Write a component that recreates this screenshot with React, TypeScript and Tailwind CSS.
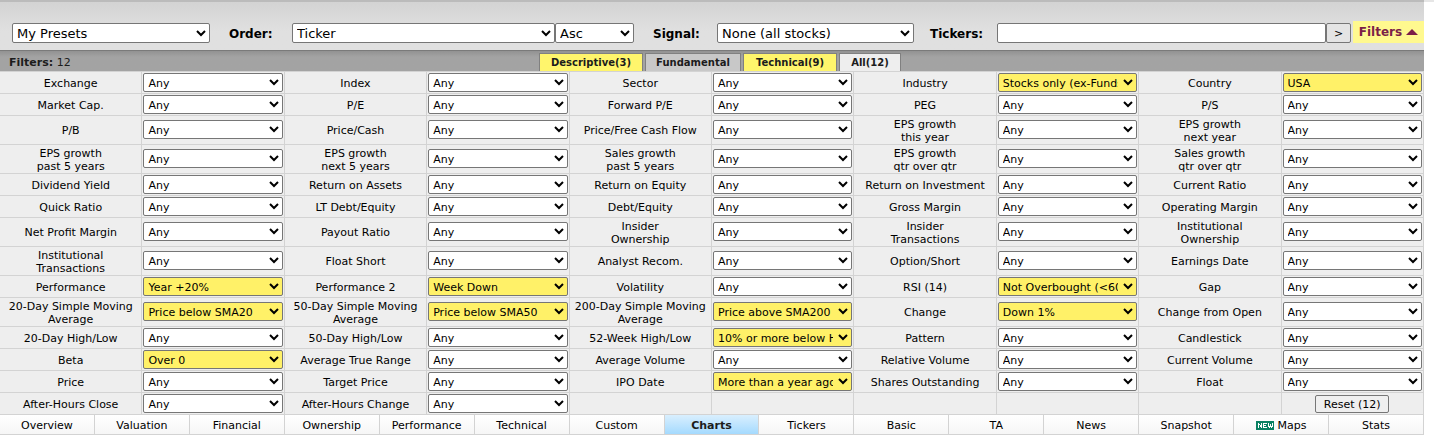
import React from "react";

type Filter = { label: string; lines?: [string, string]; value?: string };

const rows: (Filter | null)[][] = [
  [{ label: "Exchange" }, { label: "Index" }, { label: "Sector" }, { label: "Industry", value: "Stocks only (ex-Funds)" }, { label: "Country", value: "USA" }],
  [{ label: "Market Cap." }, { label: "P/E" }, { label: "Forward P/E" }, { label: "PEG" }, { label: "P/S" }],
  [{ label: "P/B" }, { label: "Price/Cash" }, { label: "Price/Free Cash Flow" }, { label: "EPS growth this year", lines: ["EPS growth", "this year"] }, { label: "EPS growth next year", lines: ["EPS growth", "next year"] }],
  [
    { label: "EPS growth past 5 years", lines: ["EPS growth", "past 5 years"] },
    { label: "EPS growth next 5 years", lines: ["EPS growth", "next 5 years"] },
    { label: "Sales growth past 5 years", lines: ["Sales growth", "past 5 years"] },
    { label: "EPS growth qtr over qtr", lines: ["EPS growth", "qtr over qtr"] },
    { label: "Sales growth qtr over qtr", lines: ["Sales growth", "qtr over qtr"] },
  ],
  [{ label: "Dividend Yield" }, { label: "Return on Assets" }, { label: "Return on Equity" }, { label: "Return on Investment" }, { label: "Current Ratio" }],
  [{ label: "Quick Ratio" }, { label: "LT Debt/Equity" }, { label: "Debt/Equity" }, { label: "Gross Margin" }, { label: "Operating Margin" }],
  [
    { label: "Net Profit Margin" },
    { label: "Payout Ratio" },
    { label: "Insider Ownership", lines: ["Insider", "Ownership"] },
    { label: "Insider Transactions", lines: ["Insider", "Transactions"] },
    { label: "Institutional Ownership", lines: ["Institutional", "Ownership"] },
  ],
  [{ label: "Institutional Transactions", lines: ["Institutional", "Transactions"] }, { label: "Float Short" }, { label: "Analyst Recom." }, { label: "Option/Short" }, { label: "Earnings Date" }],
  [{ label: "Performance", value: "Year +20%" }, { label: "Performance 2", value: "Week Down" }, { label: "Volatility" }, { label: "RSI (14)", value: "Not Overbought (<60)" }, { label: "Gap" }],
  [
    { label: "20-Day Simple Moving Average", lines: ["20-Day Simple Moving", "Average"], value: "Price below SMA20" },
    { label: "50-Day Simple Moving Average", lines: ["50-Day Simple Moving", "Average"], value: "Price below SMA50" },
    { label: "200-Day Simple Moving Average", lines: ["200-Day Simple Moving", "Average"], value: "Price above SMA200" },
    { label: "Change", value: "Down 1%" },
    { label: "Change from Open" },
  ],
  [{ label: "20-Day High/Low" }, { label: "50-Day High/Low" }, { label: "52-Week High/Low", value: "10% or more below High" }, { label: "Pattern" }, { label: "Candlestick" }],
  [{ label: "Beta", value: "Over 0" }, { label: "Average True Range" }, { label: "Average Volume" }, { label: "Relative Volume" }, { label: "Current Volume" }],
  [{ label: "Price" }, { label: "Target Price" }, { label: "IPO Date", value: "More than a year ago" }, { label: "Shares Outstanding" }, { label: "Float" }],
  [{ label: "After-Hours Close" }, { label: "After-Hours Change" }, null, null, null],
];

const views = ["Overview", "Valuation", "Financial", "Ownership", "Performance", "Technical", "Custom", "Charts", "Tickers", "Basic", "TA", "News", "Snapshot", "Maps", "Stats"];

const groups = [
  { name: "Descriptive(3)", width: "w-[104px]", tone: "bg-[#fff56c]" },
  { name: "Fundamental", width: "w-[96px]", tone: "bg-[#c8c8c8]" },
  { name: "Technical(9)", width: "w-[94px]", tone: "bg-[#fff56c]" },
  { name: "All(12)", width: "w-[62px]", tone: "bg-[#eeeeee]" },
];

const cell = "border-r border-b border-[#d3d3d3]";
const topSelect = "h-5 rounded-[2px] border border-[#767676] bg-white pr-0.5 text-[13px] text-black";

function FilterCells({ filter, last, tall }: { filter: Filter | null; last: boolean; tall: boolean }) {
  if (!filter) {
    return (
      <>
        <td className={cell}></td>
        <td className={`${cell} text-center`}>
          {last && (
            <button type="button" className="mx-auto block h-[18px] w-[74px] rounded-[2px] border border-[#767676] bg-[#efefef] pt-0.5 leading-[14px]">
              Reset (12)
            </button>
          )}
        </td>
      </>
    );
  }
  const id = filter.label.toLowerCase().replace(/[^a-z0-9]+/g, "-");
  return (
    <>
      <td className={`${cell} text-center`}>
        <label htmlFor={id} className={`block whitespace-nowrap ${tall && !filter.lines ? "" : "pt-0.5"}`}>
          {filter.lines ? (
            <>
              {filter.lines[0]}
              <br />
              {filter.lines[1]}
            </>
          ) : (
            filter.label
          )}
        </label>
      </td>
      <td className={`${cell} px-px ${tall ? "pb-px" : ""}`}>
        <select
          id={id}
          className={`block h-[19px] w-full rounded-[2px] border border-[#767676] pt-0.5 pr-0.5 text-black ${filter.value ? "bg-[#fff168]" : "bg-white"}`}
        >
          <option>{filter.value ?? "Any"}</option>
        </select>
      </td>
    </>
  );
}

export default function App() {
  return (
    <div className="border-t-2 border-[#e6e6e6] bg-white pr-[10px] font-['DejaVu_Sans',Verdana,sans-serif] text-[11px] leading-[13px] text-black">
      <header className="-mt-0.5 flex h-[51px] items-start border-t-2 border-b border-t-[#bbbbbb] border-b-[#7a7a7a] bg-linear-to-b from-[#d3d3d3] to-[#e0e0e0] to-60% pl-3">
        <div className="mt-[21px] flex min-w-0 flex-1 items-center text-[12px] font-bold">
          <select aria-label="Presets" className={`${topSelect} w-[198px] font-normal`}>
            <option>My Presets</option>
          </select>
          <label htmlFor="order" className="w-[82px] pt-0.5 pl-[19px]">Order:</label>
          <select id="order" className={`${topSelect} w-[263px] font-normal`}>
            <option>Ticker</option>
          </select>
          <select aria-label="Direction" className={`${topSelect} w-[79px] font-normal`}>
            <option>Asc</option>
          </select>
          <label htmlFor="signal" className="w-[83px] pt-0.5 pl-[19px]">Signal:</label>
          <select id="signal" className={`${topSelect} w-[197px] font-normal`}>
            <option>None (all stocks)</option>
          </select>
          <label htmlFor="tickers" className="w-[83px] pt-0.5 pl-4">Tickers:</label>
          <input id="tickers" type="text" className="h-5 min-w-0 flex-1 rounded-[2px] border border-[#767676] bg-white px-1 font-normal" />
          <button type="button" aria-label="Go" className="h-5 w-[25px] rounded-[2px] border border-[#767676] bg-[#e4e4e4] text-[11px] font-normal">
            &gt;
          </button>
        </div>
        <a href="#filters" className="mt-[19px] ml-0.5 flex h-[22px] w-[71px] items-center justify-center gap-1 bg-[#fff98f] text-[12px] font-bold text-[#7b1e48]">
          Filters
          <svg viewBox="0 0 12 6" className="h-1.5 w-3 fill-current" aria-hidden="true">
            <path d="M0 6 6 0l6 6z" />
          </svg>
        </a>
      </header>

      <div className="grid h-[21px] grid-cols-[1fr_auto_1fr] items-end border-b border-[#d3d3d3] bg-linear-to-b from-[#929292] to-[#a3a3a3] to-30% text-[#1c1c1c]">
        <div className="self-center pt-0.5 pl-[9px]">
          <b>Filters:</b> 12
        </div>
        <nav className="ml-4 flex gap-0.5">
          {groups.map((g) => (
            <a key={g.name} href="#group" className={`h-[18px] border border-b-0 border-[#808080] text-center text-[10px] leading-[18px] font-bold ${g.width} ${g.tone}`}>
              {g.name}
            </a>
          ))}
        </nav>
      </div>

      <table className="w-full table-fixed border-separate border-spacing-0 bg-[#eeeeee]">
        <tbody>
          {rows.map((row, r) => {
            const tall = row.some((f) => f?.lines);
            return (
              <tr key={r} className={tall ? "h-[29px]" : "h-[22px]"}>
                {row.map((f, c) => (
                  <FilterCells key={c} filter={f} last={c === 4} tall={tall} />
                ))}
              </tr>
            );
          })}
        </tbody>
      </table>

      <nav className="grid grid-cols-[repeat(15,minmax(0,1fr))] border-b border-[#d3d3d3]">
        {views.map((v) => (
          <a
            key={v}
            href="#view"
            className={`flex h-[19px] items-center justify-center gap-1 border-r border-[#d3d3d3] bg-linear-to-b pt-0.5 ${
              v === "Charts" ? "from-[#d9effe] to-[#a4dafe] font-bold text-[#1c1c1c]" : "from-white to-[#f6f6f6]"
            }`}
          >
            {v === "Maps" && (
              <svg viewBox="0 0 18 9" className="h-[9px] w-[18px]" shapeRendering="crispEdges" aria-hidden="true">
                <rect width="18" height="9" fill="#0a8163" />
                <path d="M2.5 2v5M3.500 3v1M4.500 4v2M5.500 2v5M7.500 2v5M8 2.500h3M8 4.500h2M8 6.500h3M12.500 2v4M14.500 3v3M16.500 2v4M13.500 5v2M15.500 5v2" fill="none" stroke="#fff" />
              </svg>
            )}
            {v}
          </a>
        ))}
      </nav>
    </div>
  );
}
